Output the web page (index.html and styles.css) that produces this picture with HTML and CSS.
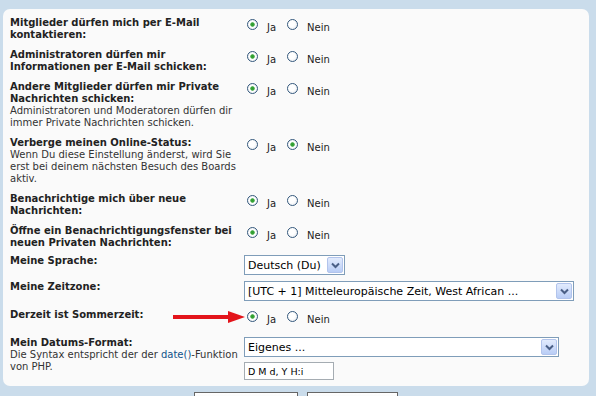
FILE: index.html
```html
<!DOCTYPE html>
<html lang="de">
<head>
<meta charset="utf-8">
<title>Persönliche Einstellungen</title>
<link rel="stylesheet" href="styles.css">
</head>
<body>
<div class="page">
  <div class="panel">
    <dl class="row">
      <dt><span class="title">Mitglieder dürfen mich per E-Mail kontaktieren:</span></dt>
      <dd class="choices">
        <label class="opt"><input type="radio" name="viewemail" checked><span>Ja</span></label>
        <label class="opt"><input type="radio" name="viewemail"><span>Nein</span></label>
      </dd>
    </dl>
    <dl class="row">
      <dt><span class="title">Administratoren dürfen mir Informationen per E-Mail schicken:</span></dt>
      <dd class="choices">
        <label class="opt"><input type="radio" name="massemail" checked><span>Ja</span></label>
        <label class="opt"><input type="radio" name="massemail"><span>Nein</span></label>
      </dd>
    </dl>
    <dl class="row">
      <dt><span class="title">Andere Mitglieder dürfen mir Private Nachrichten schicken:</span><span class="desc">Administratoren und Moderatoren dürfen dir immer Private Nachrichten schicken.</span></dt>
      <dd class="choices">
        <label class="opt"><input type="radio" name="allowpm" checked><span>Ja</span></label>
        <label class="opt"><input type="radio" name="allowpm"><span>Nein</span></label>
      </dd>
    </dl>
    <dl class="row">
      <dt><span class="title">Verberge meinen Online-Status:</span><span class="desc">Wenn Du diese Einstellung änderst, wird Sie erst bei deinem nächsten Besuch des Boards aktiv.</span></dt>
      <dd class="choices">
        <label class="opt"><input type="radio" name="hideonline"><span>Ja</span></label>
        <label class="opt"><input type="radio" name="hideonline" checked><span>Nein</span></label>
      </dd>
    </dl>
    <dl class="row">
      <dt><span class="title">Benachrichtige mich über neue Nachrichten:</span></dt>
      <dd class="choices">
        <label class="opt"><input type="radio" name="notifypm" checked><span>Ja</span></label>
        <label class="opt"><input type="radio" name="notifypm"><span>Nein</span></label>
      </dd>
    </dl>
    <dl class="row">
      <dt><span class="title">Öffne ein Benachrichtigungsfenster bei neuen Privaten Nachrichten:</span></dt>
      <dd class="choices">
        <label class="opt"><input type="radio" name="popuppm" checked><span>Ja</span></label>
        <label class="opt"><input type="radio" name="popuppm"><span>Nein</span></label>
      </dd>
    </dl>
    <dl class="row row-select">
      <dt class="dt-field"><span class="title">Meine Sprache:</span></dt>
      <dd>
        <div class="select w-lang"><span class="val">Deutsch (Du)</span><span class="arrow"><svg width="9" height="7" viewBox="0 0 9 7"><path d="M1 1.5 L4.5 5 L8 1.5" fill="none" stroke="#4a5f86" stroke-width="2"/></svg></span></div>
      </dd>
    </dl>
    <dl class="row row-select">
      <dt class="dt-field"><span class="title">Meine Zeitzone:</span></dt>
      <dd>
        <div class="select w-tz"><span class="val">[UTC + 1] Mitteleuropäische Zeit, West African ...</span><span class="arrow"><svg width="9" height="7" viewBox="0 0 9 7"><path d="M1 1.5 L4.5 5 L8 1.5" fill="none" stroke="#4a5f86" stroke-width="2"/></svg></span></div>
      </dd>
    </dl>
    <dl class="row">
      <dt><span class="title">Derzeit ist Sommerzeit:</span></dt>
      <dd class="choices">
        <label class="opt"><input type="radio" name="dst" checked><span>Ja</span></label>
        <label class="opt"><input type="radio" name="dst"><span>Nein</span></label>
      </dd>
      <svg class="pointer" width="72" height="14" viewBox="0 0 72 14"><rect x="0" y="5" width="58" height="4" fill="#e3141b"/><polygon points="55,1 72,7 55,13" fill="#e3141b"/></svg>
    </dl>
    <dl class="row">
      <dt><span class="title">Mein Datums-Format:</span><span class="desc">Die Syntax entspricht der der <a href="#" class="link">date()</a>-Funktion von PHP.</span></dt>
      <dd>
        <div class="select w-date"><span class="val">Eigenes ...</span><span class="arrow"><svg width="9" height="7" viewBox="0 0 9 7"><path d="M1 1.5 L4.5 5 L8 1.5" fill="none" stroke="#4a5f86" stroke-width="2"/></svg></span></div>
        <input class="text" type="text" value="D M d, Y H:i">
      </dd>
    </dl>
  </div>
  <div class="buttons">
    <button class="btn btn-reset" type="reset">Zurücksetzen</button>
    <button class="btn btn-submit" type="submit">Absenden</button>
  </div>
</div>
</body>
</html>
```

FILE: styles.css
```css
* { box-sizing: border-box; }
html, body { margin: 0; padding: 0; }
body {
  background: #cadceb;
  font-family: "DejaVu Sans", Verdana, sans-serif;
  font-size: 10px;
  color: #333;
  width: 596px;
  height: 396px;
  overflow: hidden;
}
.page { padding: 9px 7px 0 3px; }
.panel {
  background: #fafafa;
  border-radius: 7px;
  padding: 8px 0 6px 7px;
  display: flex;
  flex-direction: column;
  gap: 8px;
}
.row { display: flex; margin: 0; position: relative; }
.row-select { margin-top: -2px; }
.row dt { width: 234px; line-height: 12px; flex: none; }
.title { display: block; font-weight: bold; color: #222; }
.desc { display: block; color: #333; }
.link { color: #105289; text-decoration: none; }
.row dd { margin: 0; flex: 1; }
.choices { display: flex; align-items: flex-start; padding-bottom: 3px; }
.opt { display: flex; align-items: flex-start; margin-right: 8px; }
.opt input {
  appearance: none;
  -webkit-appearance: none;
  width: 11px;
  height: 11px;
  margin: 2px 9px 0 3px;
  border: 1px solid #34587c;
  border-radius: 50%;
  background: radial-gradient(circle at 40% 40%, #ffffff 40%, #dfe4ea 100%);
}
.opt input:checked {
  background: radial-gradient(circle, #2f9a2f 0, #3aa63a 1.8px, #ffffff 2.6px, #ffffff 45%, #dfe4ea 100%);
}
.opt span { padding-top: 5px; line-height: 12px; font-size: 10px; color: #222; }
.select {
  display: flex;
  align-items: center;
  height: 20px;
  border: 1px solid #7f9db9;
  background: #fff;
  font-size: 11px;
  color: #000;
  padding-left: 3px;
}
.select .val { flex: 1; white-space: nowrap; overflow: hidden; }
.select .arrow {
  flex: none;
  width: 16px;
  height: 16px;
  margin: 0 1px;
  border: 1px solid #b2c4ec;
  border-radius: 2px;
  background: linear-gradient(#e2ebfd, #b9cdf6);
  display: flex;
  align-items: center;
  justify-content: center;
}
.w-lang { width: 101px; }
.w-tz { width: 330px; }
.w-date { width: 315px; }
.text {
  display: block;
  width: 90px;
  height: 18px;
  margin: 5px 0 0;
  border: 1px solid #a5acb2;
  background: #fff;
  padding: 0 3px;
  font-family: "DejaVu Sans", Verdana, sans-serif;
  font-size: 9.5px;
  color: #000;
}
.pointer { position: absolute; left: 163px; top: 1px; }
.buttons { display: flex; justify-content: center; gap: 9px; padding-top: 6px; }
.btn {
  height: 20px;
  border: 1px solid #666;
  background: linear-gradient(#ffffff, #e9e9e9);
  font-family: "DejaVu Sans", Verdana, sans-serif;
  font-size: 11px;
  color: #000;
  padding: 0;
}
.btn-reset { width: 104px; }
.btn-submit { width: 91px; }
```
